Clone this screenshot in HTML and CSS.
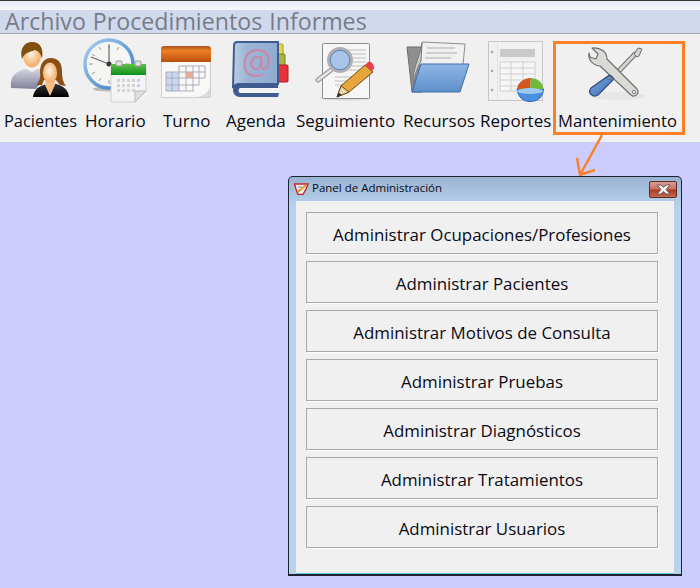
FILE: index.html
```html
<!DOCTYPE html>
<html lang="en">
<head>
    <meta charset="UTF-8">
    <title>Panel de Administración</title>
    <link rel="stylesheet" href="styles.css">
</head>
<body>
    <div class="topstrip"></div>
    <div class="menubar">
        <span>Archivo</span><span>Procedimientos</span><span>Informes</span>
    </div>
    <div class="toolbar">
        <div class="tool t-pacientes">
            <svg width="60" height="56" viewBox="0 0 60 56">
                <defs>
                    <linearGradient id="suit" x1="0" y1="0" x2="0" y2="1"><stop offset="0" stop-color="#d4d4e0"/><stop offset="1" stop-color="#7f8199"/></linearGradient>
                    <radialGradient id="skin" cx="0.45" cy="0.4"><stop offset="0" stop-color="#fff3e2"/><stop offset="1" stop-color="#f4b477"/></radialGradient>
                    <linearGradient id="blackcoat" x1="0" y1="0" x2="0" y2="1"><stop offset="0" stop-color="#333"/><stop offset="1" stop-color="#000"/></linearGradient>
                </defs>
                <path d="M1 46C0 36 3 31 14 27L30 27L36 34L26 47Z" fill="url(#suit)"/>
                <path d="M15 26L22 30L29 26L27 22H17Z" fill="#f3f3f3"/>
                <ellipse cx="22" cy="14" rx="9" ry="11.5" fill="url(#skin)"/>
                <path d="M12 17C9 6 15 0 22 0C30 0 34 6 32 17C31 12 29 9 25 8C20 10 15 10 12 17Z" fill="#80500f"/>
                <path d="M23 55C24 47 29 44 37 42L46 42C54 44 58 48 59 55Z" fill="url(#blackcoat)"/>
                <path d="M35 43L40 54L45 43L44 36H36Z" fill="#f6bd85"/>
                <path d="M26 43C29 40 31 36 30 30C30 22 34 16 41 16C48 16 52 21 52 29C52 36 53 40 56 44L50 43L46 38H34L32 43Z" fill="#8d4f14"/>
                <ellipse cx="40" cy="31" rx="7" ry="10.5" fill="url(#skin)"/>
            </svg>
        </div>
        <div class="tool t-horario">
            <svg width="64" height="64" viewBox="0 0 64 64">
                <defs>
                    <linearGradient id="ring" x1="0" y1="0" x2="1" y2="1"><stop offset="0" stop-color="#a9cff0"/><stop offset="1" stop-color="#2f79c0"/></linearGradient>
                    <linearGradient id="greenbar" x1="0" y1="0" x2="0" y2="1"><stop offset="0" stop-color="#5fc04a"/><stop offset="1" stop-color="#0c8f1c"/></linearGradient>
                </defs>
                <ellipse cx="26" cy="50" rx="16" ry="2.5" fill="#b9b9b9"/>
                <circle cx="26" cy="25" r="24" fill="#f5f5f3" stroke="url(#ring)" stroke-width="3.5"/>
                <path d="M26 5v4M26 41v4M6 25h4M42 25h4M16 8l2 3M36 8l-2 3M9 15l3 2M9 35l3-2M16 42l2-3" stroke="#9a9a9a" fill="none"/>
                <path d="M26 25L26 6M26 25L8 18" stroke="#6a6a6a" stroke-width="1.2" fill="none"/>
                <circle cx="26" cy="25" r="2.5" fill="#333"/>
                <path d="M28 26H63V52L52 63H28Z" fill="#f4f4f4" stroke="#cfcfcf"/>
                <rect x="28" y="25" width="35" height="11" fill="url(#greenbar)"/>
                <rect x="33" y="22" width="6" height="5" rx="1" fill="#e0e0e0" stroke="#999"/>
                <rect x="52" y="22" width="6" height="5" rx="1" fill="#e0e0e0" stroke="#999"/>
                <g fill="#d4d4d4">
                    <rect x="34" y="40" width="3" height="3"/><rect x="39" y="40" width="3" height="3"/><rect x="44" y="40" width="3" height="3"/><rect x="49" y="40" width="3" height="3"/>
                    <rect x="34" y="45" width="3" height="3"/><rect x="39" y="45" width="3" height="3"/><rect x="44" y="45" width="3" height="3"/><rect x="49" y="45" width="3" height="3"/>
                    <rect x="34" y="50" width="3" height="3"/><rect x="39" y="50" width="3" height="3"/><rect x="44" y="50" width="3" height="3"/><rect x="49" y="50" width="3" height="3"/>
                </g>
                <g fill="#dcc4ee">
                    <rect x="54" y="40" width="3" height="3"/><rect x="54" y="45" width="3" height="3"/>
                </g>
                <path d="M52 63V52H63Z" fill="#dedede" stroke="#bbb"/>
            </svg>
        </div>
        <div class="tool t-turno">
            <svg width="50" height="52" viewBox="0 0 50 52">
                <defs>
                    <linearGradient id="cover" x1="0" y1="0" x2="0" y2="1"><stop offset="0" stop-color="#a9531d"/><stop offset="0.3" stop-color="#ee7f22"/><stop offset="1" stop-color="#b94f0c"/></linearGradient>
                </defs>
                <rect x="0.5" y="12" width="49" height="39.5" fill="#f8f8f6" stroke="#cfcfcf"/>
                <path d="M0 16V3Q0 0 3 0H47Q50 0 50 3V16Z" fill="url(#cover)"/>
                <rect x="5" y="26" width="13" height="19" fill="#c9d8f2"/>
                <rect x="25" y="26" width="7" height="6" fill="#f6ab8e"/>
                <path d="M5 26H44M5 32H44M5 39H38M5 45H33M5 26V45M11 26V45M18 20V45M25 20V45M32 20V45M38 20V39M44 20V32M18 20H44" stroke="#acacba" fill="none"/>
                <path d="M36 51C42 50 48 46 49 40V51Z" fill="#dcdcdc"/>
            </svg>
        </div>
        <div class="tool t-agenda">
            <svg width="58" height="57" viewBox="0 0 58 57">
                <defs>
                    <linearGradient id="book" x1="0" y1="0" x2="1" y2="0"><stop offset="0" stop-color="#bccde2"/><stop offset="0.3" stop-color="#9bb6d6"/><stop offset="1" stop-color="#8fabd0"/></linearGradient>
                </defs>
                <rect x="46" y="3" width="6" height="14" rx="1" fill="#ebd53f" stroke="#a89a20"/>
                <rect x="46" y="13" width="8" height="14" rx="1" fill="#a5b83d" stroke="#76852a"/>
                <rect x="46" y="24" width="11" height="17" rx="1" fill="#ea323a" stroke="#a82026"/>
                <path d="M6 1H47V43H8C5 43 3 45 2 47L3 5Q3 1 6 1Z" fill="url(#book)" stroke="#3f5b8f" stroke-width="2"/>
                <path d="M2 49C2 45 5 43 9 43H47V47H10C7 47 7 52 10 52H48L47 56H9C5 56 2 53 2 49Z" fill="#3f5b8f"/>
                <path d="M10 47H47V52H10C7 52 7 47 10 47Z" fill="#f5f5f5"/>
                <text class="at-sign" x="26" y="33">@</text>
            </svg>
        </div>
        <div class="tool t-seguimiento">
            <svg width="60" height="58" viewBox="0 0 60 58">
                <ellipse cx="31" cy="55" rx="26" ry="2.5" fill="#dadada"/>
                <rect x="7.5" y="0.5" width="47" height="55" rx="1" fill="#f6f6f6" stroke="#8a8a8a"/>
                <path d="M32 7H51M36 11H51M38 15H51M38 19H51M37 23H51M34 27H46M20 34H38M20 38H34M20 42H30" stroke="#bcbcbc" fill="none"/>
                <path d="M16 27L3 37" stroke="#9c9c9c" stroke-width="5" stroke-linecap="round"/>
                <path d="M16 27L3 37" stroke="#e6e6e6" stroke-width="2.5" stroke-linecap="round"/>
                <circle cx="25" cy="17" r="11.5" fill="#a8c4e8" stroke="#b0b0b4" stroke-width="3"/>
                <circle cx="25" cy="17" r="9.8" fill="none" stroke="#5d7fae"/>
                <path d="M22 54L26 43L50 22L58 29L34 49Z" fill="#e6a63c" stroke="#6e4a12"/>
                <path d="M50 22L53 19Q55 18 57 20L59 23Q60 25 58 27L56 28Z" fill="#e8404a"/>
                <path d="M22 54L26 43L34 49Z" fill="#f2d9a8" stroke="#6e4a12"/>
                <path d="M22 54L23.5 49.5L27 52Z" fill="#333"/>
            </svg>
        </div>
        <div class="tool t-recursos">
            <svg width="63" height="53" viewBox="0 0 63 53">
                <defs>
                    <linearGradient id="bluefolder" x1="0" y1="0" x2="0" y2="1"><stop offset="0" stop-color="#8db6e4"/><stop offset="1" stop-color="#5f90cb"/></linearGradient>
                </defs>
                <path d="M0 6H15V51H5Z" fill="#8f8f8f" stroke="#6d6d6d"/>
                <path d="M15 1L58 3L56 24H11Z" fill="#f0f0f0" stroke="#8e8e8e"/>
                <path d="M20 7H48M19 12H50M18 17H44" stroke="#adadad" fill="none"/>
                <path d="M8 50C5 40 9 30 14 20L15 2C13 15 7 24 6 38Z" fill="#c9c9c9" stroke="#777"/>
                <path d="M14 23H62L53 51H5Z" fill="url(#bluefolder)" stroke="#3f6ea8"/>
            </svg>
        </div>
        <div class="tool t-reportes">
            <svg width="56" height="61" viewBox="0 0 56 61">
                <rect x="0.5" y="0.5" width="54" height="59" fill="#f1f1ef" stroke="#c6c6c6"/>
                <path d="M9.5 1V59" stroke="#e2e2e2"/>
                <circle cx="4" cy="11" r="1.3" fill="#a9a9a9"/><circle cx="4" cy="30" r="1.3" fill="#a9a9a9"/><circle cx="4" cy="49" r="1.3" fill="#a9a9a9"/>
                <rect x="12" y="8" width="35" height="8" fill="#c9c9c9"/>
                <path d="M12 21H47V50H12ZM12 27H47M12 33H47M12 39H47M12 45H47M23 21V50M35 21V50" stroke="#cfcfcf" fill="#f6f6f6"/>
                <path d="M29 48C30 57 36 60.5 42 60.5C49 60.5 55 57 55.5 48Z" fill="#4a90de" stroke="#2f6cb0"/>
                <path d="M29 48C30 41 36 37 43 37L42 48Z" fill="#d2561e"/>
                <path d="M43 37C50 37 55 42 55.5 48H42Z" fill="#72b93a"/>
                <ellipse cx="42" cy="50" rx="13" ry="3" fill="#9cc8f0"/>
            </svg>
        </div>
        <div class="tool t-mantenimiento">
            <svg width="60" height="54" viewBox="0 0 60 54">
                <defs>
                    <linearGradient id="handle" x1="0" y1="0" x2="1" y2="1"><stop offset="0" stop-color="#7aa6dc"/><stop offset="1" stop-color="#3f6fae"/></linearGradient>
                </defs>
                <ellipse cx="30" cy="49" rx="28" ry="4" fill="#e6e6e6"/>
                <path d="M28 27L48 6" stroke="#6f6f6f" stroke-width="5"/>
                <path d="M28 27L48 6" stroke="#d5d5d0" stroke-width="3"/>
                <path d="M46 7L50 1L54 2L51 9L49 10Z" fill="#d5d5d0" stroke="#6f6f6f" stroke-linejoin="round"/>
                <path d="M4 1L10 7L8 12L2 10L1 6C0 11 3 18 12 19L43 48C47 51 52 46 49 42L19 12C19 5 13 0 4 1Z" fill="#dadad6" stroke="#6f6f6f" stroke-width="1.2" stroke-linejoin="round"/>
                <circle cx="46" cy="45" r="1.6" fill="#fff" stroke="#777"/>
                <path d="M20 29C22 27 26 30 25 33L10 48C5 51 -1 46 3 41Z" fill="url(#handle)" stroke="#2a4d85" stroke-width="1.2"/>
                <circle cx="21" cy="31" r="1.3" fill="#dce6f2" stroke="#456"/>
            </svg>
        </div>
        <span class="label l-pacientes">Pacientes</span>
        <span class="label l-horario">Horario</span>
        <span class="label l-turno">Turno</span>
        <span class="label l-agenda">Agenda</span>
        <span class="label l-seguimiento">Seguimiento</span>
        <span class="label l-recursos">Recursos</span>
        <span class="label l-reportes">Reportes</span>
        <span class="label l-mantenimiento">Mantenimiento</span>
    </div>

    <div class="callout"></div>
    <svg class="arrow" width="40" height="46" viewBox="0 0 40 46">
        <path d="M28 1L6 41M3 24L6 41L21 36" fill="none" stroke="#fb7f26" stroke-width="2.4"/>
    </svg>

    <div class="window">
        <div class="titlebar">
            <svg class="app-icon" width="15" height="12" viewBox="0 0 15 12">
                <path d="M0.5 1H14L12 6L9 11.5H4L2 6Z" fill="#f8f0f0" stroke="#c8242a" stroke-width="1.4"/>
                <path d="M4 9L12 2" stroke="#d9a02a" stroke-width="2"/>
                <path d="M4 4H8M4.5 7H6" stroke="#888"/>
            </svg>
            <span class="title">Panel de Administración</span>
            <button class="close">
                <svg width="15" height="11" viewBox="0 0 15 11">
                    <path d="M1 1H5L7.5 3.5L10 1H14L10 5.5L14 10H10L7.5 7.5L5 10H1L5 5.5Z" fill="#f6f6f6" stroke="#6a5a5a"/>
                </svg>
            </button>
        </div>
        <div class="panel">
            <div class="admin-btn">Administrar Ocupaciones/Profesiones</div>
            <div class="admin-btn">Administrar Pacientes</div>
            <div class="admin-btn">Administrar Motivos de Consulta</div>
            <div class="admin-btn">Administrar Pruebas</div>
            <div class="admin-btn">Administrar Diagnósticos</div>
            <div class="admin-btn">Administrar Tratamientos</div>
            <div class="admin-btn">Administrar Usuarios</div>
        </div>
    </div>
</body>
</html>
```

FILE: styles.css
```css
html, body {
    margin: 0;
    padding: 0;
}

body {
    width: 700px;
    height: 588px;
    overflow: hidden;
    position: relative;
    background-color: #ccccff;
    font-family: 'Open Sans', 'Noto Sans', sans-serif;
    color: #0a0a14;
}

.topstrip {
    height: 10px;
    box-sizing: border-box;
    border-top: 1px solid #3a3a30;
    background: linear-gradient(#e4ebf6, #f6f8fc);
}

.menubar {
    height: 23px;
    display: flex;
    align-items: center;
    gap: 7px;
    padding-left: 5px;
    background-color: #d1d9ed;
    border-bottom: 1px solid #a4a6ac;
    color: #777c88;
    font-size: 23.2px;
    line-height: 23px;
}

.toolbar {
    height: 108px;
    background-color: #f0f0f0;
    display: grid;
    grid-template-columns: 81px 76px 66px 70px 106px 77px 77px 147px;
    grid-template-rows: 69px 39px;
}

.tool {
    display: flex;
    align-items: flex-start;
}

.tool svg {
    display: block;
    overflow: visible;
}

/* icon offsets inside each grid column */
.t-pacientes { padding: 8px 0 0 10px; }
.t-horario { padding: 5px 0 0 2px; }
.t-turno { padding: 12px 0 0 4px; }
.t-agenda { padding: 7px 0 0 8px; }
.t-seguimiento { padding: 9px 0 0 22px; }
.t-recursos { padding: 7px 0 0 8px; }
.t-reportes { padding: 7px 0 0 12px; }
.t-mantenimiento { padding: 13px 0 0 35px; }

.label {
    font-size: 17px;
    line-height: 24px;
    white-space: nowrap;
    padding-top: 6px;
}

.l-pacientes { padding-left: 4px; font-size: 16.4px; }
.l-horario { padding-left: 4px; }
.l-turno { padding-left: 6px; }
.l-agenda { padding-left: 3px; }
.l-seguimiento { padding-left: 3px; }
.l-recursos { padding-left: 4px; }
.l-reportes { padding-left: 4px; }
.l-mantenimiento { padding-left: 5px; font-size: 16.6px; }

.at-sign {
    font-size: 34px;
    fill: #c98aa9;
    text-anchor: middle;
}

/* annotation drawn over the screenshot */
.callout {
    position: absolute;
    left: 553px;
    top: 41px;
    width: 126px;
    height: 88px;
    border: 3px solid #fb7f26;
}

.arrow {
    position: absolute;
    left: 574px;
    top: 134px;
}

.window {
    position: absolute;
    left: 288px;
    top: 176px;
    width: 394px;
    height: 400px;
    box-sizing: border-box;
    border: 1px solid #1c2430;
    border-bottom-width: 2px;
    border-radius: 5px 5px 0 0;
    background: linear-gradient(#9ab3d1, #b9d2ec 30px);
    padding: 0 7px;
    display: flex;
    flex-direction: column;
}

.titlebar {
    height: 24px;
    flex-shrink: 0;
    display: flex;
    align-items: center;
    gap: 3px;
    margin-left: -2px;
    margin-right: -3px;
}

.title {
    font-size: 11.5px;
    line-height: 14px;
    padding-bottom: 2px;
    flex: 1;
}

.close {
    width: 28px;
    height: 17px;
    margin-top: 1px;
    padding: 0;
    border: 1px solid #5a2a24;
    border-radius: 2px;
    background: linear-gradient(#d9a096, #c9705f 45%, #ad3a28 55%, #c96a50);
    display: flex;
    align-items: center;
    justify-content: center;
}

.panel {
    flex: 1;
    background-color: #f0f0f0;
    border-bottom: 1px solid #5ec4e8;
    padding: 11px 16px 0 10px;
    display: flex;
    flex-direction: column;
    gap: 7px;
}

.admin-btn {
    height: 42px;
    box-sizing: border-box;
    border: 1px solid #a9a9a9;
    box-shadow: 1px 1px 0 #fff;
    display: flex;
    align-items: center;
    justify-content: center;
    font-size: 16.9px;
    padding-top: 3px;
}
```
